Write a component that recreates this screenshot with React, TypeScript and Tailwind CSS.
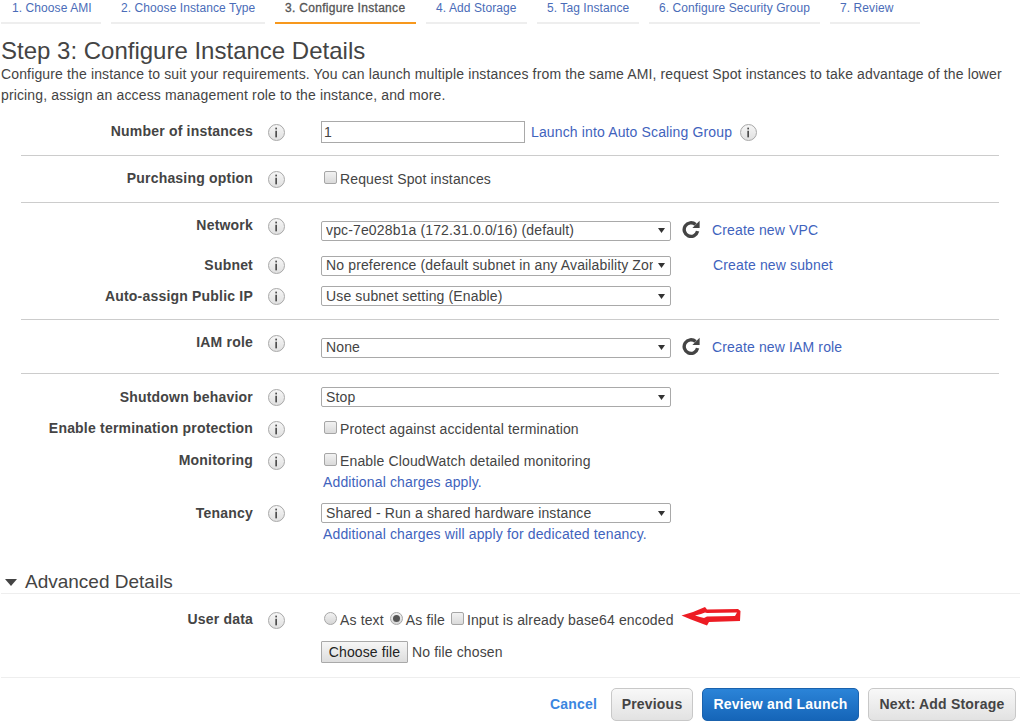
import type { ReactNode } from 'react'

const TABS = [
  { label: '1. Choose AMI', width: 'w-[100px] pl-[11px]' },
  { label: '2. Choose Instance Type', width: 'w-[154px] pl-[10px]' },
  { label: '3. Configure Instance', width: 'w-[141px] pl-[10px]', active: true },
  { label: '4. Add Storage', width: 'w-[101px] pl-[10px]' },
  { label: '5. Tag Instance', width: 'w-[102px] pl-[10px]' },
  { label: '6. Configure Security Group', width: 'w-[171px] pl-[10px]' },
  { label: '7. Review', width: 'w-[90px] pl-[10px]' },
]

// ── Small bits ────────────────────────────────────────────────────────────────

function Info({ className = '' }: { className?: string }) {
  return (
    <span className={`flex h-[17px] w-[17px] shrink-0 items-center justify-center rounded-full border border-[#a8a8a8] bg-gradient-to-b from-[#f6f6f6] to-[#e0e0e0] ${className}`}>
      <svg viewBox="0 0 17 17" width={15} height={15}>
        <rect x="7.2" y="3" width="1.8" height="2" fill="#444" />
        <rect x="7.2" y="6.5" width="1.8" height="7.5" fill="#444" />
      </svg>
    </span>
  )
}

function Refresh() {
  return (
    <svg viewBox="0 0 18 18" width={18} height={18} className="ml-[11px] -mt-[4px] shrink-0">
      <path d="M15.6 11.2 A6.8 6.8 0 1 1 13.6 4.6" fill="none" stroke="#444" strokeWidth="3.4" />
      <path d="M17.6 0.8 V8 H10.4 Z" fill="#444" />
    </svg>
  )
}

function Check({ label }: { label: string }) {
  return (
    <span className="flex h-5 items-center">
      <span className="mr-[3px] -mt-[3px] h-[13px] w-[13px] rounded-[2px] border border-[#a6a6a6] bg-gradient-to-b from-[#f2f2f2] to-[#dadada]" />
      <span>{label}</span>
    </span>
  )
}

function Radio({ label, checked }: { label: string; checked?: boolean }) {
  return (
    <span className="flex h-5 items-center">
      <span className="mr-[3px] -mt-[3px] flex h-[13px] w-[13px] items-center justify-center rounded-full border border-[#a6a6a6] bg-gradient-to-b from-[#f2f2f2] to-[#d6d6d6]">
        {checked && <span className="h-[7px] w-[7px] rounded-full bg-[#555]" />}
      </span>
      <span>{label}</span>
    </span>
  )
}

function Select({ value }: { value: string }) {
  return (
    <div className="flex h-5 w-[350px] items-center rounded-[2px] border border-[#a9a9a9] bg-white pl-[4px]">
      <span className="min-w-0 flex-1 overflow-hidden whitespace-nowrap">{value}</span>
      <svg viewBox="0 0 7 5" width={7} height={5} className="ml-[5px] mr-[5px] shrink-0">
        <path d="M0 0h7L3.5 5z" fill="#333" />
      </svg>
    </div>
  )
}

function Link({ children, className = '' }: { children: ReactNode; className?: string }) {
  return <span className={`text-[#3f63bd] ${className}`}>{children}</span>
}

function Divider({ className }: { className: string }) {
  return <div className={`mx-[21px] h-px bg-[#cccccc] ${className}`} />
}

// ── Form row ──────────────────────────────────────────────────────────────────

function Row({ label, labelClass = '', iconClass = '', className = '', children }: {
  label: string; labelClass?: string; iconClass?: string; className?: string; children: ReactNode
}) {
  return (
    <div className={`flex items-start ${className}`}>
      <div className={`w-[253px] shrink-0 text-right font-bold leading-5 tracking-[0.2px] ${labelClass}`}>{label}</div>
      <Info className={`ml-[15px] ${iconClass}`} />
      <div className="ml-[36px] min-w-0 flex-1">{children}</div>
    </div>
  )
}

export default function App() {
  return (
    <div className="h-[724px] w-[1020px] overflow-hidden bg-white font-['Liberation_Sans',Arial,sans-serif] text-[14px] tracking-[0.14px] text-[#444444]">
      {/* Wizard tabs */}
      <div className="ml-px flex h-6 gap-[10px]">
        {TABS.map(t => (
          <div key={t.label}
            className={`h-6 border-b-2 text-[12px] leading-4 ${t.width} ${t.active ? 'border-[#f7981d] tracking-[0.3px] text-[#555] [-webkit-text-stroke:0.3px_#555]' : 'border-[#eeeeee] tracking-[0.08px] text-[#4a6cb8]'}`}>
            {t.label}
          </div>
        ))}
      </div>

      <h1 className="mt-[12px] ml-px text-[24px] leading-[29px] font-normal tracking-normal">Step 3: Configure Instance Details</h1>
      <p className="ml-px w-[1010px] leading-[21px] -mt-[1px]">
        Configure the instance to suit your requirements. You can launch multiple instances from the same AMI, request Spot instances to take advantage of the lower pricing, assign an access management role to the instance, and more.
      </p>

      <Row label="Number of instances" iconClass="mt-[3px]" className="mt-[15px]">
        <div className="flex items-center">
          <div className="flex h-[22px] w-[204px] items-center border border-[#a9a9a9] pl-[2px]">1</div>
          <Link className="ml-[6px]">Launch into Auto Scaling Group</Link>
          <Info className="ml-[8px]" />
        </div>
      </Row>
      <Divider className="mt-[12px]" />

      <Row label="Purchasing option" iconClass="mt-[2px]" labelClass="-mt-[1px]" className="mt-[13px]">
        <div className="ml-[3px]"><Check label="Request Spot instances" /></div>
      </Row>
      <Divider className="mt-[13px]" />

      <Row label="Network" labelClass="-mt-[5px]" iconClass="-mt-[2px]" className="mt-[17px]">
        <div className="flex items-center">
          <Select value="vpc-7e028b1a (172.31.0.0/16) (default)" />
          <Refresh />
          <Link className="ml-[12px]">Create new VPC</Link>
        </div>
      </Row>
      <Row label="Subnet" iconClass="mt-[2px]" className="mt-[14px]">
        <div className="flex items-center">
          <Select value="No preference (default subnet in any Availability Zone)" />
          <Link className="ml-[42px]">Create new subnet</Link>
        </div>
      </Row>
      <Row label="Auto-assign Public IP" iconClass="mt-[2px]" className="mt-[10px]">
        <Select value="Use subnet setting (Enable)" />
      </Row>
      <Divider className="mt-[13px]" />

      <Row label="IAM role" labelClass="-mt-[5px]" iconClass="-mt-[2px]" className="mt-[17px]">
        <div className="flex items-center">
          <Select value="None" />
          <Refresh />
          <Link className="ml-[12px]">Create new IAM role</Link>
        </div>
      </Row>
      <Divider className="mt-[15px]" />

      <Row label="Shutdown behavior" iconClass="mt-[2px]" className="mt-[13px]">
        <Select value="Stop" />
      </Row>
      <Row label="Enable termination protection" iconClass="mt-[3px]" className="mt-[11px]">
        <div className="ml-[3px] mt-px"><Check label="Protect against accidental termination" /></div>
      </Row>
      <Row label="Monitoring" iconClass="mt-[3px]" className="mt-[11px]">
        <div className="ml-[3px] mt-px"><Check label="Enable CloudWatch detailed monitoring" /></div>
        <Link className="ml-[2px] mt-px block leading-5">Additional charges apply.</Link>
      </Row>
      <Row label="Tenancy" iconClass="mt-[2px]" className="mt-[11px]">
        <Select value="Shared - Run a shared hardware instance" />
        <Link className="ml-[2px] mt-px block leading-5">Additional charges will apply for dedicated tenancy.</Link>
      </Row>

      <div className="mt-[27px] flex h-[22px] items-center">
        <svg viewBox="0 0 12 7" width={12} height={7} className="ml-[5px]">
          <path d="M0 0h12L6 7z" fill="#444" />
        </svg>
        <span className="ml-[8px] text-[19px] tracking-normal">Advanced Details</span>
      </div>
      <div className="ml-px h-px bg-[#eeeeee]" />

      <Row label="User data" labelClass="-mt-[1px]" iconClass="mt-[2px]" className="mt-[16px]">
        <div className="ml-[3px] flex items-center gap-[6px]">
          <Radio label="As text" />
          <Radio label="As file" checked />
          <Check label="Input is already base64 encoded" />
          <svg viewBox="0 0 60 20" width={60} height={20} className="ml-px -mt-[8px]">
            <path d="M0.5 9.5 L12 6 L24 1 L26 3.5 L57 3 L59.5 5 L59 15 L28 16 L26 19.5 L22 18 L10 13.5 Z" fill="#ed1c24" />
            <path d="M14 9.5 L20 8 L24 6.5 L26 7 L56 6.5 L54 10 L26 10.5 L23 12 L19 11 Z" fill="#ffffff" />
          </svg>
        </div>
        <div className="mt-[11px] flex items-center">
          <span className="flex h-[22px] w-[87px] items-center justify-center rounded-[1px] border border-[#a9a9a9] bg-gradient-to-b from-[#f6f6f6] to-[#dddddd] text-[#222]">Choose file</span>
          <span className="ml-[4px]">No file chosen</span>
        </div>
      </Row>
      <div className="ml-px mt-[14px] h-px bg-[#eeeeee]" />

      {/* Footer buttons */}
      <div className="mt-[10px] flex items-center justify-end gap-[9px] pr-[4px] font-bold tracking-[0.2px]">
        <span className="mr-[5px] text-[#3b86e0]">Cancel</span>
        <span className="flex h-[33px] w-[82px] items-center justify-center rounded-[5px] border border-[#c8c8c8] bg-gradient-to-b from-[#f8f8f8] to-[#e2e2e2]">Previous</span>
        <span className="flex h-[33px] w-[157px] items-center justify-center rounded-[5px] border border-[#1a62ad] bg-gradient-to-b from-[#2b84d8] to-[#1565b8] text-white">Review and Launch</span>
        <span className="flex h-[33px] w-[148px] items-center justify-center rounded-[5px] border border-[#c8c8c8] bg-gradient-to-b from-[#f8f8f8] to-[#e2e2e2]">Next: Add Storage</span>
      </div>
    </div>
  )
}
